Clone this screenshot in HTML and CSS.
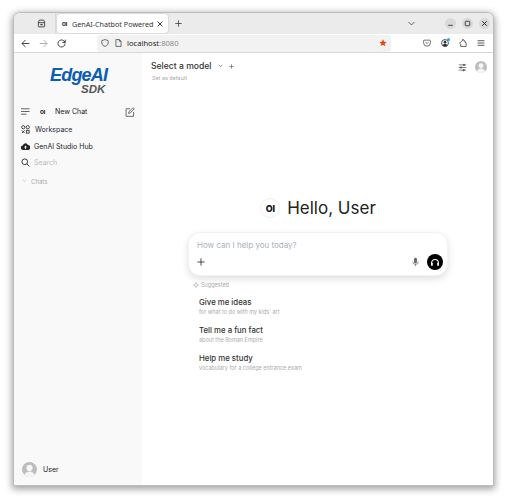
FILE: index.html
```html
<!DOCTYPE html>
<html lang="en">
<head>
<meta charset="utf-8">
<title>GenAI-Chatbot Powered</title>
<link rel="stylesheet" href="styles.css">
</head>
<body>
<div class="window">
  <header class="tabbar">
    <div class="tab-left">
      <svg class="ico9" viewBox="0 0 16 16" fill="none" stroke="#3d3d3d" stroke-width="1.6"><path d="M2.500 6.500V13a1 1 0 0 0 1 1h9a1 1 0 0 0 1-1V6.500"/><path d="M1.800 6.500h12.400M2.200 6.300 4 2h8l1.800 4.300"/><path d="M6 10h4" stroke-width="2"/></svg>
    </div>
    <div class="tab">
      <span class="oi tab-oi">OI</span>
      <span class="tab-title">GenAI-Chatbot Powered</span>
      <svg class="tab-x" viewBox="0 0 10 10" stroke="#333" stroke-width="1.200"><path d="M2 2l6 6M8 2l-6 6"/></svg>
    </div>
    <svg class="tab-plus" viewBox="0 0 12 12" stroke="#333" stroke-width="1.300"><path d="M6 .5v11M.5 6h11"/></svg>
    <div class="spacer"></div>
    <svg class="tab-list" viewBox="0 0 12 8" fill="none" stroke="#333" stroke-width="1.300"><path d="M1 1.500l5 5 5-5"/></svg>
    <div class="winbtns">
      <span class="winbtn"><svg viewBox="0 0 10 10" stroke="#333" stroke-width="1"><path d="M2.500 7h5"/></svg></span>
      <span class="winbtn"><svg viewBox="0 0 10 10" fill="none" stroke="#333" stroke-width="1"><rect x="2.500" y="2.500" width="5" height="5" rx="1"/></svg></span>
      <span class="winbtn"><svg viewBox="0 0 10 10" stroke="#222" stroke-width="1.100"><path d="M2.500 2.500l5 5M7.500 2.500l-5 5"/></svg></span>
    </div>
  </header>
  <nav class="navbar">
    <div class="nav-btns">
      <svg viewBox="0 0 14 14" fill="none" stroke="#333" stroke-width="1.400"><path d="M13 7H1.500M7 1.500 1.500 7 7 12.500"/></svg>
      <svg viewBox="0 0 14 14" fill="none" stroke="#a8a8a8" stroke-width="1.400"><path d="M1 7h11.500M7 1.500 12.500 7 7 12.500"/></svg>
      <svg viewBox="0 0 14 14" fill="none" stroke="#333" stroke-width="1.400"><path d="M12.500 7a5.500 5.500 0 1 1-1.600-3.900L12.500 5"/><path d="M12.800 1V5.400H8.400"/></svg>
    </div>
    <div class="urlbar">
      <svg class="shield" viewBox="0 0 14 14" fill="none" stroke="#444" stroke-width="1.300"><path d="M7 1 12.500 2.800v4.200c0 3-2.400 5-5.500 6C3.900 12 1.500 10 1.500 7V2.800z"/></svg>
      <svg class="page" viewBox="0 0 12 14" fill="none" stroke="#444" stroke-width="1.300"><path d="M1.500 1h6l3 3v9h-9zM7.500 1v3h3"/></svg>
      <span class="url">localhost<span class="url-port">:8080</span></span>
      <div class="spacer"></div>
      <svg class="star" viewBox="0 0 12 12"><path fill="#e8490f" d="M6 .5l1.700 3.500 3.800.5-2.800 2.600.7 3.900L6 8.600l-3.400 1.900.7-3.900L.5 4.500l3.800-.5z"/></svg>
    </div>
    <div class="nav-right">
      <svg viewBox="0 0 14 14" fill="none" stroke="#444" stroke-width="1.300"><path d="M2.500 2h9A1.500 1.500 0 0 1 13 3.500V6.500a6 6 0 0 1-12 0V3.500A1.500 1.500 0 0 1 2.500 2z"/><path d="M4.500 5.500 7 8l2.500-2.500"/></svg>
      <span class="acct">
        <svg viewBox="0 0 14 14"><circle cx="7" cy="7" r="6" fill="none" stroke="#333" stroke-width="1.500"/><circle cx="7" cy="5.500" r="2.300" fill="#333"/><path fill="#333" d="M2.800 11.200c.8-2.200 2.400-3 4.200-3s3.400.8 4.200 3a6 6 0 0 1-8.400 0z"/></svg>
        <i class="acct-dot"></i>
      </span>
      <svg viewBox="0 0 14 14" fill="none" stroke="#333" stroke-width="1.300"><path d="M6 1h1.800l.5 1.800 2.200.7v2.300l2 .8V13H3V9L1 7.500 4 4.300 6 3z"/></svg>
      <svg viewBox="0 0 14 14" stroke="#333" stroke-width="1.400"><path d="M1 3h12M1 7h12M1 11h12"/></svg>
    </div>
  </nav>
  <div class="app">
    <aside class="sidebar">
      <div class="brand">
        <div class="brand-main">EdgeAI</div>
        <div class="brand-sub">SDK</div>
      </div>
      <div class="side-top">
        <svg class="ico9" viewBox="0 0 10 8" stroke="#444" stroke-width=".9"><path d="M0 1h9.500M0 4h9.500M0 7h6"/></svg>
        <span class="oi side-oi">OI</span>
        <span class="side-label">New Chat</span>
        <div class="spacer"></div>
        <svg class="edit" viewBox="0 0 14 14" fill="none" stroke="#555" stroke-width="1.200"><path d="M7 2.500H1.500V13H12V7"/><path d="M5.500 6.800 11.300 1l1.700 1.700-5.800 5.800-2.200.5z"/></svg>
      </div>
      <div class="side-item workspace-row">
        <svg class="ico9" viewBox="0 0 10 10" fill="none" stroke="#444" stroke-width="1.100"><circle cx="2.500" cy="2.500" r="1.800"/><circle cx="7.500" cy="2.500" r="1.800"/><path d="M1 6l3 3M4 6l-3 3"/><rect x="6" y="6" width="3" height="3"/></svg>
        <span class="side-label workspace">Workspace</span>
      </div>
      <div class="side-item">
        <svg class="ico9" viewBox="0 0 12 12"><path fill="#222" d="M6 1.500a3.200 3.200 0 0 1 3.100 2.500A2.600 2.600 0 0 1 9 10.500H3a2.900 2.900 0 0 1-.5-5.800A3.600 3.600 0 0 1 6 1.500z"/><path stroke="#fff" stroke-width="1.200" fill="none" d="M6 9.500V5.500M4.300 7.200 6 5.500 7.700 7.200"/></svg>
        <span class="side-label">GenAI Studio Hub</span>
      </div>
      <div class="side-item search-row">
        <svg class="ico9" viewBox="0 0 12 12" fill="none" stroke="#333" stroke-width="1.300"><circle cx="5" cy="5" r="3.800"/><path d="M7.800 7.800 11.200 11.200"/></svg>
        <span class="side-label search">Search</span>
      </div>
      <div class="chats">
        <svg class="chev" viewBox="0 0 8 6" fill="none" stroke="#bbb" stroke-width="1"><path d="M1 1l3 3 3-3"/></svg>
        <span>Chats</span>
      </div>
      <div class="spacer"></div>
      <div class="side-user">
        <svg class="avatar" viewBox="0 0 16 16"><use href="#avatar"/></svg>
        <span class="side-user-name">User</span>
      </div>
    </aside>
    <main class="main">
      <div class="topbar">
        <div class="model-col">
          <div class="model-row">
            <span class="model">Select a model</span>
            <svg class="chev-model" viewBox="0 0 8 6" fill="none" stroke="#555" stroke-width="1"><path d="M1 1l3 3 3-3"/></svg>
            <svg class="plus" viewBox="0 0 8 8" stroke="#555" stroke-width="1"><path d="M4 .5v7M.5 4h7"/></svg>
          </div>
          <div class="default">Set as default</div>
        </div>
        <div class="spacer"></div>
        <svg class="sliders" viewBox="0 0 12 12" fill="#555" stroke="#555" stroke-width="1"><path d="M1 2.500h10M1 6h10M1 9.500h10"/><circle cx="8" cy="2.500" r="1"/><circle cx="4" cy="6" r="1"/><circle cx="7.500" cy="9.500" r="1"/></svg>
        <svg class="avatar top-avatar" viewBox="0 0 16 16">
          <symbol id="avatar" viewBox="0 0 16 16">
            <circle cx="8" cy="8" r="8" fill="#bdbdbd"/>
            <circle cx="8" cy="6.300" r="3.300" fill="#f5f5f5"/>
            <path fill="#f5f5f5" d="M2.500 14c.8-2.700 3-4 5.500-4s4.700 1.300 5.500 4A8 8 0 0 1 8 16a8 8 0 0 1-5.500-2z"/>
          </symbol>
          <use href="#avatar"/>
        </svg>
      </div>
      <div class="center">
        <div class="hello">
          <span class="hello-logo"><span class="oi">OI</span></span>
          <span class="hello-text">Hello, User</span>
        </div>
        <div class="prompt">
          <div class="placeholder">How can I help you today?</div>
          <div class="prompt-row">
            <svg class="prompt-plus" viewBox="0 0 10 10" stroke="#333" stroke-width="1.100"><path d="M5 .5v9M.5 5h9"/></svg>
            <div class="spacer"></div>
            <svg class="mic" viewBox="0 0 10 14" fill="#666"><rect x="3" y="1" width="4" height="8" rx="2"/><path fill="none" stroke="#666" d="M1 6.500a4 4 0 0 0 8 0M5 10.500V13"/></svg>
            <span class="send"><svg viewBox="0 0 12 12" fill="none" stroke="#fff" stroke-width="1.300"><path d="M2 9.500V7a4 4 0 0 1 8 0v2.500"/><rect x="1.300" y="7" width="2" height="3.500" fill="#fff" stroke="none"/><rect x="8.700" y="7" width="2" height="3.500" fill="#fff" stroke="none"/></svg></span>
          </div>
        </div>
        <div class="suggest">
          <div class="suggest-head">
            <svg class="spark" viewBox="0 0 8 8" fill="none" stroke="#bbb" stroke-width="1"><path d="M4 0.500 5 3l2.500 1L5 5 4 7.500 3 5 .5 4 3 3z"/></svg>
            <span>Suggested</span>
          </div>
          <div class="suggest-item"><div class="s-title">Give me ideas</div><div class="s-sub">for what to do with my kids' art</div></div>
          <div class="suggest-item"><div class="s-title">Tell me a fun fact</div><div class="s-sub">about the Roman Empire</div></div>
          <div class="suggest-item"><div class="s-title">Help me study</div><div class="s-sub">vocabulary for a college entrance exam</div></div>
        </div>
      </div>
    </main>
  </div>
</div>
</body>
</html>
```
FILE: styles.css
```css
* { box-sizing: border-box; }
html, body { margin: 0; height: 100%; background: #fff; overflow: hidden; }
body { padding: 12px 12px 14px 13px; font-family: Inter, "Liberation Sans", sans-serif; color: #222; }
svg { display: block; flex: none; }
.spacer { flex: 1; }
.window {
  width: 481px; height: 474px; display: flex; flex-direction: column;
  border: 1px solid #bcbcbc; border-radius: 7px 7px 0 0; overflow: hidden; background: #fff;
  box-shadow: 0 2px 7px 1px rgba(0,0,0,.38);
}
.ico9 { width: 9px; height: 9px; }

.tabbar { height: 21px; background: #ebebeb; display: flex; align-items: center; padding-right: 3px; }
.tab-left { width: 42px; height: 100%; display: flex; align-items: center; justify-content: flex-end; padding-right: 9px; border-right: 1px solid #dcdcdc; }
.tab {
  width: 111px; height: 19px; margin-left: 1px; background: #fff; border-radius: 3px; display: flex; align-items: center;
  padding-left: 5px; box-shadow: 0 0 2px rgba(0,0,0,.25);
  font-family: "Noto Sans", Roboto, sans-serif; font-size: 7.200px; color: #333; white-space: nowrap;
}
.oi { font-family: Inter, "Liberation Sans", sans-serif; font-weight: 800; letter-spacing: -.2px; color: #111; }
.tab-oi { font-size: 5px; margin-right: 5px; }
.tab-title { flex: 1; }
.tab-x { width: 8px; height: 8px; margin: 0 4px 0 2px; }
.tab-plus { width: 7px; height: 7px; margin-left: 7px; }
.tab-list { width: 7px; height: 5px; margin-right: 30px; }
.winbtns { display: flex; gap: 6px; }
.winbtn { width: 11px; height: 11px; border-radius: 50%; background: #d9d9d9; display: flex; align-items: center; justify-content: center; }
.winbtn svg { width: 9px; height: 9px; }

.navbar { height: 19px; background: #fff; display: flex; align-items: center; padding: 0 8px 0 7px; border-bottom: 1px solid #d8d8d8; }
.nav-btns { display: flex; gap: 9px; width: 76px; }
.nav-btns svg { width: 9px; height: 9px; }
.urlbar { width: 294px; height: 17px; background: #f2f2f2; border-radius: 3px; display: flex; align-items: center; padding: 0 4px 0 4px; font-family: "Noto Sans", Roboto, sans-serif; font-size: 7.600px; color: #222; }
.shield { width: 8px; height: 8px; margin-right: 6px; }
.page { width: 7px; height: 8px; margin-right: 5px; }
.star { width: 8px; height: 8px; }
.url-port { color: #8a8a8a; }
.nav-right { flex: 1; display: flex; align-items: center; justify-content: flex-end; gap: 10px; }
.nav-right svg { width: 8px; height: 8px; }
.acct { position: relative; display: block; }
.acct-dot { position: absolute; top: -1px; right: -1px; width: 3px; height: 3px; border-radius: 50%; background: #2aa7f0; }

.app { flex: 1; display: flex; min-height: 0; }
.sidebar { width: 128px; background: #f9f9f9; display: flex; flex-direction: column; padding: 0 7px 8px 7px; }
.brand { height: 49px; padding-top: 14px; font-family: "Liberation Sans", sans-serif; font-weight: 700; font-style: italic; padding-left: 29px; }
.brand-main { font-size: 18px; line-height: 17px; color: #0a5db3; letter-spacing: -.8px; }
.brand-sub { font-size: 11.500px; line-height: 11px; color: #555; padding-left: 31px; }
.side-top { height: 17px; display: flex; align-items: center; margin-top: 1px; }
.side-oi { font-size: 5px; margin-left: 10px; width: 15px; }
.side-label { font-size: 7px; font-weight: 400; color: #222; }
.edit { width: 10px; height: 10px; }
.side-item { height: 17px; display: flex; align-items: center; gap: 4px; }
.workspace-row { margin-top: 1px; }
.search-row { height: 15px; }
.workspace { margin-left: 1px; color: #1a2a3a; }
.search { color: #bbb; }
.chats { display: flex; align-items: center; gap: 4px; font-size: 6px; color: #aaa; height: 16px; padding-left: 1px; margin-top: 3px; }
.chev { width: 5px; height: 4px; }
.side-user { display: flex; align-items: center; gap: 6px; height: 16px; padding-left: 1px; }
.side-user-name { font-size: 7px; font-weight: 400; color: #222; }
.avatar { width: 15px; height: 15px; }

.main { flex: 1; display: flex; flex-direction: column; min-width: 0; }
.topbar { display: flex; align-items: flex-start; padding: 8px 6px 0 9px; height: 30px; }
.model-row { display: flex; align-items: center; }
.model { font-size: 8.600px; font-weight: 500; color: #333; }
.chev-model { width: 5px; height: 4px; margin-left: 6px; }
.plus { width: 5px; height: 5px; margin-left: 6px; }
.default { font-size: 5.400px; color: #aaa; margin: 4px 0 0 1px; }
.sliders { margin: 2px 8px 0 0; width: 9px; height: 9px; }
.top-avatar { width: 12px; height: 12px; margin-top: 0; }
.center { flex: 1; display: flex; flex-direction: column; padding: 113px 0 0 46px; }
.hello { display: flex; align-items: center; justify-content: center; gap: 7px; width: 260px; height: 24px; }
.hello-logo { width: 20px; height: 20px; border-radius: 50%; border: 1px solid #f0f0f0; display: flex; align-items: center; justify-content: center; }
.hello-logo .oi { font-size: 9px; }
.hello-text { font-size: 17px; color: #222; font-weight: 400; }
.prompt { width: 260px; height: 44px; margin-top: 12px; border: 1px solid #f2f2f2; border-radius: 12px; box-shadow: 0 3px 7px rgba(0,0,0,.13); padding: 7px 4px 0 8px; background: #fff; }
.placeholder { font-size: 8px; color: #a9b2bd; line-height: 11px; }
.prompt-row { display: flex; align-items: center; margin-top: 2px; height: 17px; }
.prompt-plus { width: 8px; height: 8px; }
.mic { width: 7px; height: 10px; margin-right: 8px; }
.send { width: 16px; height: 16px; border-radius: 50%; background: #000; display: flex; align-items: center; justify-content: center; }
.send svg { width: 10px; height: 10px; }
.suggest { padding-left: 5px; margin-top: 4px; }
.suggest-head { display: flex; align-items: center; gap: 2px; font-size: 5.500px; color: #aaa; height: 10px; }
.spark { width: 6px; height: 6px; }
.suggest-item { padding-left: 6px; height: 28px; }
.suggest-head + .suggest-item { margin-top: 7px; }
.s-title { font-size: 7.800px; font-weight: 500; color: #333; line-height: 11px; }
.s-sub { font-size: 5.500px; color: #aaa; line-height: 8px; }
```
